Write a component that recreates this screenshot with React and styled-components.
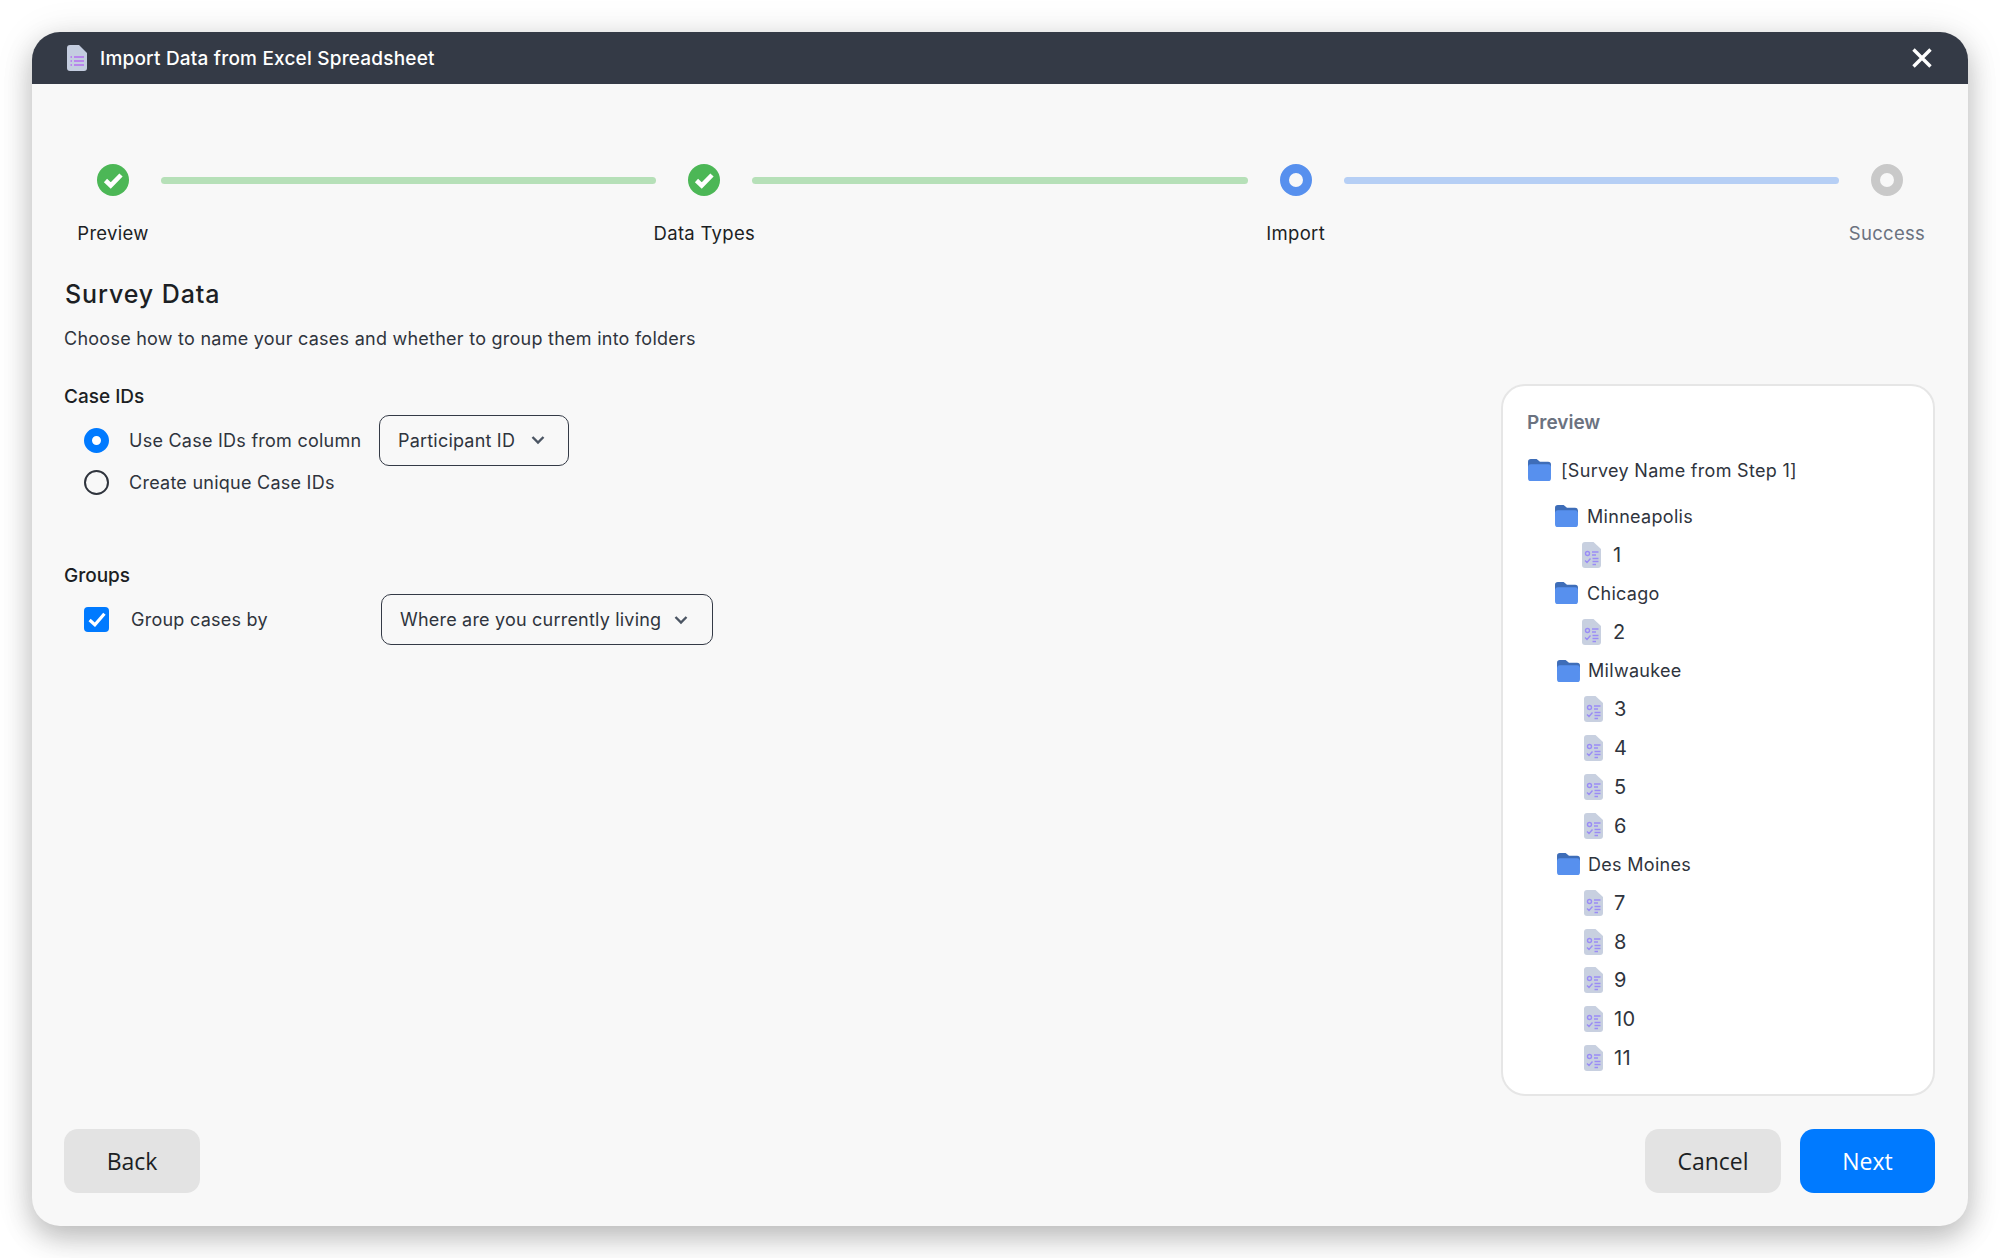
import React from "react";
import styled, { createGlobalStyle } from "styled-components";

const Global = createGlobalStyle`
  html, body { margin: 0; padding: 0; background: #fff; }
  body { font-family: Inter, "Liberation Sans", sans-serif; color: #1c1f24; }
  * { box-sizing: border-box; }
`;

const Page = styled.div`
  width: 2000px;
  height: 1258px;
  padding: 32px;
  overflow: hidden;
`;
const Modal = styled.section`
  width: 1936px;
  height: 1194px;
  display: flex;
  flex-direction: column;
  border-radius: 28px;
  background: #f8f8f8;
  box-shadow: 0 12px 28px rgba(0, 0, 0, 0.22), 0 4px 40px rgba(0, 0, 0, 0.1);
`;
const TitleBar = styled.header`
  height: 52px;
  flex: none;
  display: flex;
  align-items: center;
  padding: 0 34px 0 35px;
  gap: 13px;
  border-radius: 28px 28px 0 0;
  background: #343a46;
  color: #fff;
`;
const TitleText = styled.h1`
  margin: 0;
  flex: 1;
  font-size: 19px;
  font-weight: 500;
  letter-spacing: 0.2px;
`;
const CloseButton = styled.button`
  all: unset;
  display: flex;
  width: 24px;
  height: 24px;
  align-items: center;
  justify-content: center;
`;
const Body = styled.div`
  flex: 1;
  display: flex;
  flex-direction: column;
  padding: 80px 33px 33px 32px;
  min-height: 0;
`;
const Stepper = styled.ol`
  list-style: none;
  margin: 0;
  padding: 0 0 0 1px;
  display: flex;
  align-items: flex-start;
`;
const Step = styled.li`
  width: 96px;
  flex: none;
  display: flex;
  flex-direction: column;
  align-items: center;
  gap: 26px;
`;
const StepLabel = styled.span`
  font-size: 18.5px;
  line-height: 22px;
  white-space: nowrap;
  letter-spacing: 0.3px;
  color: ${(p) => (p.$muted ? "#6b7280" : "#1c1f24")};
`;
const StepLine = styled.span`
  flex: 1;
  height: 7px;
  margin-top: 13px;
  border-radius: 4px;
  background: ${(p) => p.$color};
`;
const Dot = styled.span`
  width: 32px;
  height: 32px;
  border-radius: 50%;
  border: 9.5px solid ${(p) => p.$color};
  background: #f8f8f8;
`;
const Columns = styled.div`
  flex: 1;
  display: flex;
  justify-content: space-between;
  min-height: 0;
`;
const FormColumn = styled.div`
  padding-top: 35px;
`;
const Heading = styled.h2`
  margin: 0;
  padding-left: 1px;
  font-size: 25px;
  line-height: 30px;
  font-weight: 500;
  letter-spacing: 0.9px;
`;
const Lead = styled.p`
  margin: 17px 0 0;
  font-size: 18px;
  line-height: 26px;
  letter-spacing: 0.25px;
  color: #2f343d;
`;
const GroupLabel = styled.h3`
  margin: ${(p) => p.$top}px 0 0;
  font-size: 19px;
  line-height: 24px;
  font-weight: 500;
`;
const OptionRow = styled.div`
  display: flex;
  align-items: center;
  height: ${(p) => p.$height}px;
  margin-top: ${(p) => p.$top || 0}px;
  padding-left: 20px;
`;
const Radio = styled.span`
  width: 25px;
  height: 25px;
  flex: none;
  border-radius: 50%;
  border: ${(p) => (p.$on ? "8px solid #007aff" : "2px solid #2f343d")};
  background: ${(p) => (p.$on ? "#fff" : "transparent")};
`;
const Check = styled.span`
  width: 25px;
  height: 25px;
  flex: none;
  border-radius: 4px;
  background: #007aff;
  display: flex;
  align-items: center;
  justify-content: center;
`;
const OptionLabel = styled.span`
  margin-left: ${(p) => p.$left}px;
  width: ${(p) => (p.$width ? `${p.$width}px` : "auto")};
  font-size: 18px;
  letter-spacing: 0.25px;
  white-space: nowrap;
  color: #2f343d;
`;
const Select = styled.button`
  all: unset;
  box-sizing: border-box;
  height: 51px;
  width: ${(p) => p.$width}px;
  display: flex;
  align-items: center;
  justify-content: space-between;
  padding: 0 ${(p) => p.$pad}px 0 18px;
  border: 1.6px solid #343a46;
  border-radius: 10px;
  font-size: 18px;
  letter-spacing: 0.2px;
  color: #2f343d;
`;
const Panel = styled.aside`
  width: 434px;
  height: 712px;
  margin-top: 140px;
  padding: 24px 24px 0 24px;
  flex: none;
  background: #fff;
  border: 2px solid #e6e6e6;
  border-radius: 24px;
`;
const PanelTitle = styled.div`
  font-size: 19px;
  line-height: 26px;
  font-weight: 600;
  color: #6b7280;
`;
const Tree = styled.ul`
  list-style: none;
  margin: 15px 0 0;
  padding: 0;
`;
const TreeRow = styled.li`
  height: 38.7px;
  margin-bottom: ${(p) => (p.$root ? 7 : 0)}px;
  display: flex;
  align-items: center;
  gap: ${(p) => p.$gap}px;
  padding-left: ${(p) => p.$indent}px;
  font-size: ${(p) => (p.$leaf ? 20 : 18)}px;
  letter-spacing: 0.3px;
  color: #2f343d;
`;
const Footer = styled.footer`
  flex: none;
  display: flex;
  align-items: center;
  gap: 19px;
  margin-top: 33px;
`;
const Spacer = styled.div`
  flex: 1;
`;
const ActionButton = styled.button`
  all: unset;
  box-sizing: border-box;
  width: ${(p) => (p.$primary ? 135 : 136)}px;
  height: 64px;
  display: flex;
  align-items: center;
  justify-content: center;
  padding-bottom: 1px;
  border-radius: 14px;
  font-family: "Open Sans", sans-serif;
  font-size: 23px;
  background: ${(p) => (p.$primary ? "#007aff" : "#e3e3e3")};
  color: ${(p) => (p.$primary ? "#fff" : "#1c1f24")};
`;

const CheckCircle = ({ color }) => (
  <svg width="32" height="32" viewBox="0 0 32 32">
    <circle cx="16" cy="16" r="16" fill={color} />
    <path d="M8.5 16.5l5.2 5L24 11" fill="none" stroke="#fff" strokeWidth="4.6" />
  </svg>
);
const Chevron = () => (
  <svg width="14" height="10" viewBox="0 0 14 10">
    <path d="M1.5 2l5.5 5.5L12.5 2" fill="none" stroke="#4b5563" strokeWidth="2.4" />
  </svg>
);
const Folder = () => (
  <svg width="23" height="22" viewBox="0 0 24 23" style={{ flex: "none" }}>
    <path d="M0 3a3 3 0 013-3h6l3.5 3H21a3 3 0 013 3v6H0z" fill="#3e6db8" />
    <path d="M0 8a3 3 0 013-2.5h18A3 3 0 0124 8v12a3 3 0 01-3 3H3a3 3 0 01-3-3z" fill="#5790ee" />
  </svg>
);
const SurveyFile = () => (
  <svg width="19" height="26" viewBox="0 0 19 26" style={{ flex: "none" }}>
    <path d="M3 0h8.5l7.5 7v16a3 3 0 01-3 3H3a3 3 0 01-3-3V3a3 3 0 013-3z" fill="#c8d0e0" />
    <circle cx="5.5" cy="11.5" r="2" fill="none" stroke="#9a8cf5" strokeWidth="1.4" />
    <path d="M10 10h6.5M10 13h4M3 18.5l2 2 3.5-4M10.5 16.5h6M10.5 19.5h6M10.5 22.5h3.5" fill="none" stroke="#9a8cf5" strokeWidth="1.4" />
  </svg>
);
const SheetIcon = () => (
  <svg width="20" height="26" viewBox="0 0 20 26" style={{ flex: "none" }}>
    <path d="M3 0h9l8 8v15a3 3 0 01-3 3H3a3 3 0 01-3-3V3a3 3 0 013-3z" fill="#c4cde0" />
    <path d="M7 12h10M7 16h10M7 20h10" stroke="#b46ef0" strokeWidth="1.5" />
    <path d="M3.5 12h1.5M3.5 16h1.5M3.5 20h1.5" stroke="#b46ef0" strokeWidth="1.5" />
  </svg>
);
const CloseIcon = () => (
  <svg width="20" height="20" viewBox="0 0 20 20">
    <path d="M1.5 1.5l17 17M18.5 1.5l-17 17" stroke="#fff" strokeWidth="3.4" />
  </svg>
);

const steps = [
  { label: "Preview", done: true, line: "#b6e0b8" },
  { label: "Data Types", done: true, line: "#b6e0b8" },
  { label: "Import", color: "#5790ee", line: "#b6cff5" },
  { label: "Success", color: "#c9c9c9", muted: true },
];
const tree = [
  { type: "folder", text: "Minneapolis", indent: 28, gap: 9 },
  { type: "file", text: "1", indent: 55, gap: 12 },
  { type: "folder", text: "Chicago", indent: 28, gap: 9 },
  { type: "file", text: "2", indent: 55, gap: 12 },
  { type: "folder", text: "Milwaukee", indent: 30, gap: 8 },
  ...["3", "4", "5", "6"].map((text) => ({ type: "file", text, indent: 57, gap: 11 })),
  { type: "folder", text: "Des Moines", indent: 30, gap: 8 },
  ...["7", "8", "9", "10", "11"].map((text) => ({ type: "file", text, indent: 57, gap: 11 })),
];

export default function App() {
  return (
    <Page>
      <Global />
      <Modal>
        <TitleBar>
          <SheetIcon />
          <TitleText>Import Data from Excel Spreadsheet</TitleText>
          <CloseButton aria-label="Close">
            <CloseIcon />
          </CloseButton>
        </TitleBar>
        <Body>
          <Stepper>
            {steps.map((s) => (
              <React.Fragment key={s.label}>
                <Step>
                  {s.done ? <CheckCircle color="#4cb756" /> : <Dot $color={s.color} />}
                  <StepLabel $muted={s.muted}>{s.label}</StepLabel>
                </Step>
                {s.line && <StepLine $color={s.line} />}
              </React.Fragment>
            ))}
          </Stepper>
          <Columns>
            <FormColumn>
              <Heading>Survey Data</Heading>
              <Lead>Choose how to name your cases and whether to group them into folders</Lead>
              <GroupLabel $top={33}>Case IDs</GroupLabel>
              <OptionRow $height={51} $top={5.5}>
                <Radio $on />
                <OptionLabel $left={20} $width={250}>Use Case IDs from column</OptionLabel>
                <Select $width={190} $pad={23}>
                  Participant ID <Chevron />
                </Select>
              </OptionRow>
              <OptionRow $height={33}>
                <Radio />
                <OptionLabel $left={20}>Create unique Case IDs</OptionLabel>
              </OptionRow>
              <GroupLabel $top={65.5}>Groups</GroupLabel>
              <OptionRow $height={51} $top={6}>
                <Check>
                  <svg width="18" height="15" viewBox="0 0 17 14">
                    <path d="M1.5 7.5l5 4.5 9-10.5" fill="none" stroke="#fff" strokeWidth="3" />
                  </svg>
                </Check>
                <OptionLabel $left={22} $width={250}>Group cases by</OptionLabel>
                <Select $width={332} $pad={24}>
                  Where are you currently living <Chevron />
                </Select>
              </OptionRow>
            </FormColumn>
            <Panel>
              <PanelTitle>Preview</PanelTitle>
              <Tree>
                <TreeRow $root $gap={10} $indent={1}>
                  <Folder />
                  [Survey Name from Step 1]
                </TreeRow>
                {tree.map((r) => (
                  <TreeRow key={r.text} $leaf={r.type === "file"} $gap={r.gap} $indent={r.indent}>
                    {r.type === "folder" ? <Folder /> : <SurveyFile />}
                    {r.text}
                  </TreeRow>
                ))}
              </Tree>
            </Panel>
          </Columns>
          <Footer>
            <ActionButton>Back</ActionButton>
            <Spacer />
            <ActionButton>Cancel</ActionButton>
            <ActionButton $primary>Next</ActionButton>
          </Footer>
        </Body>
      </Modal>
    </Page>
  );
}
